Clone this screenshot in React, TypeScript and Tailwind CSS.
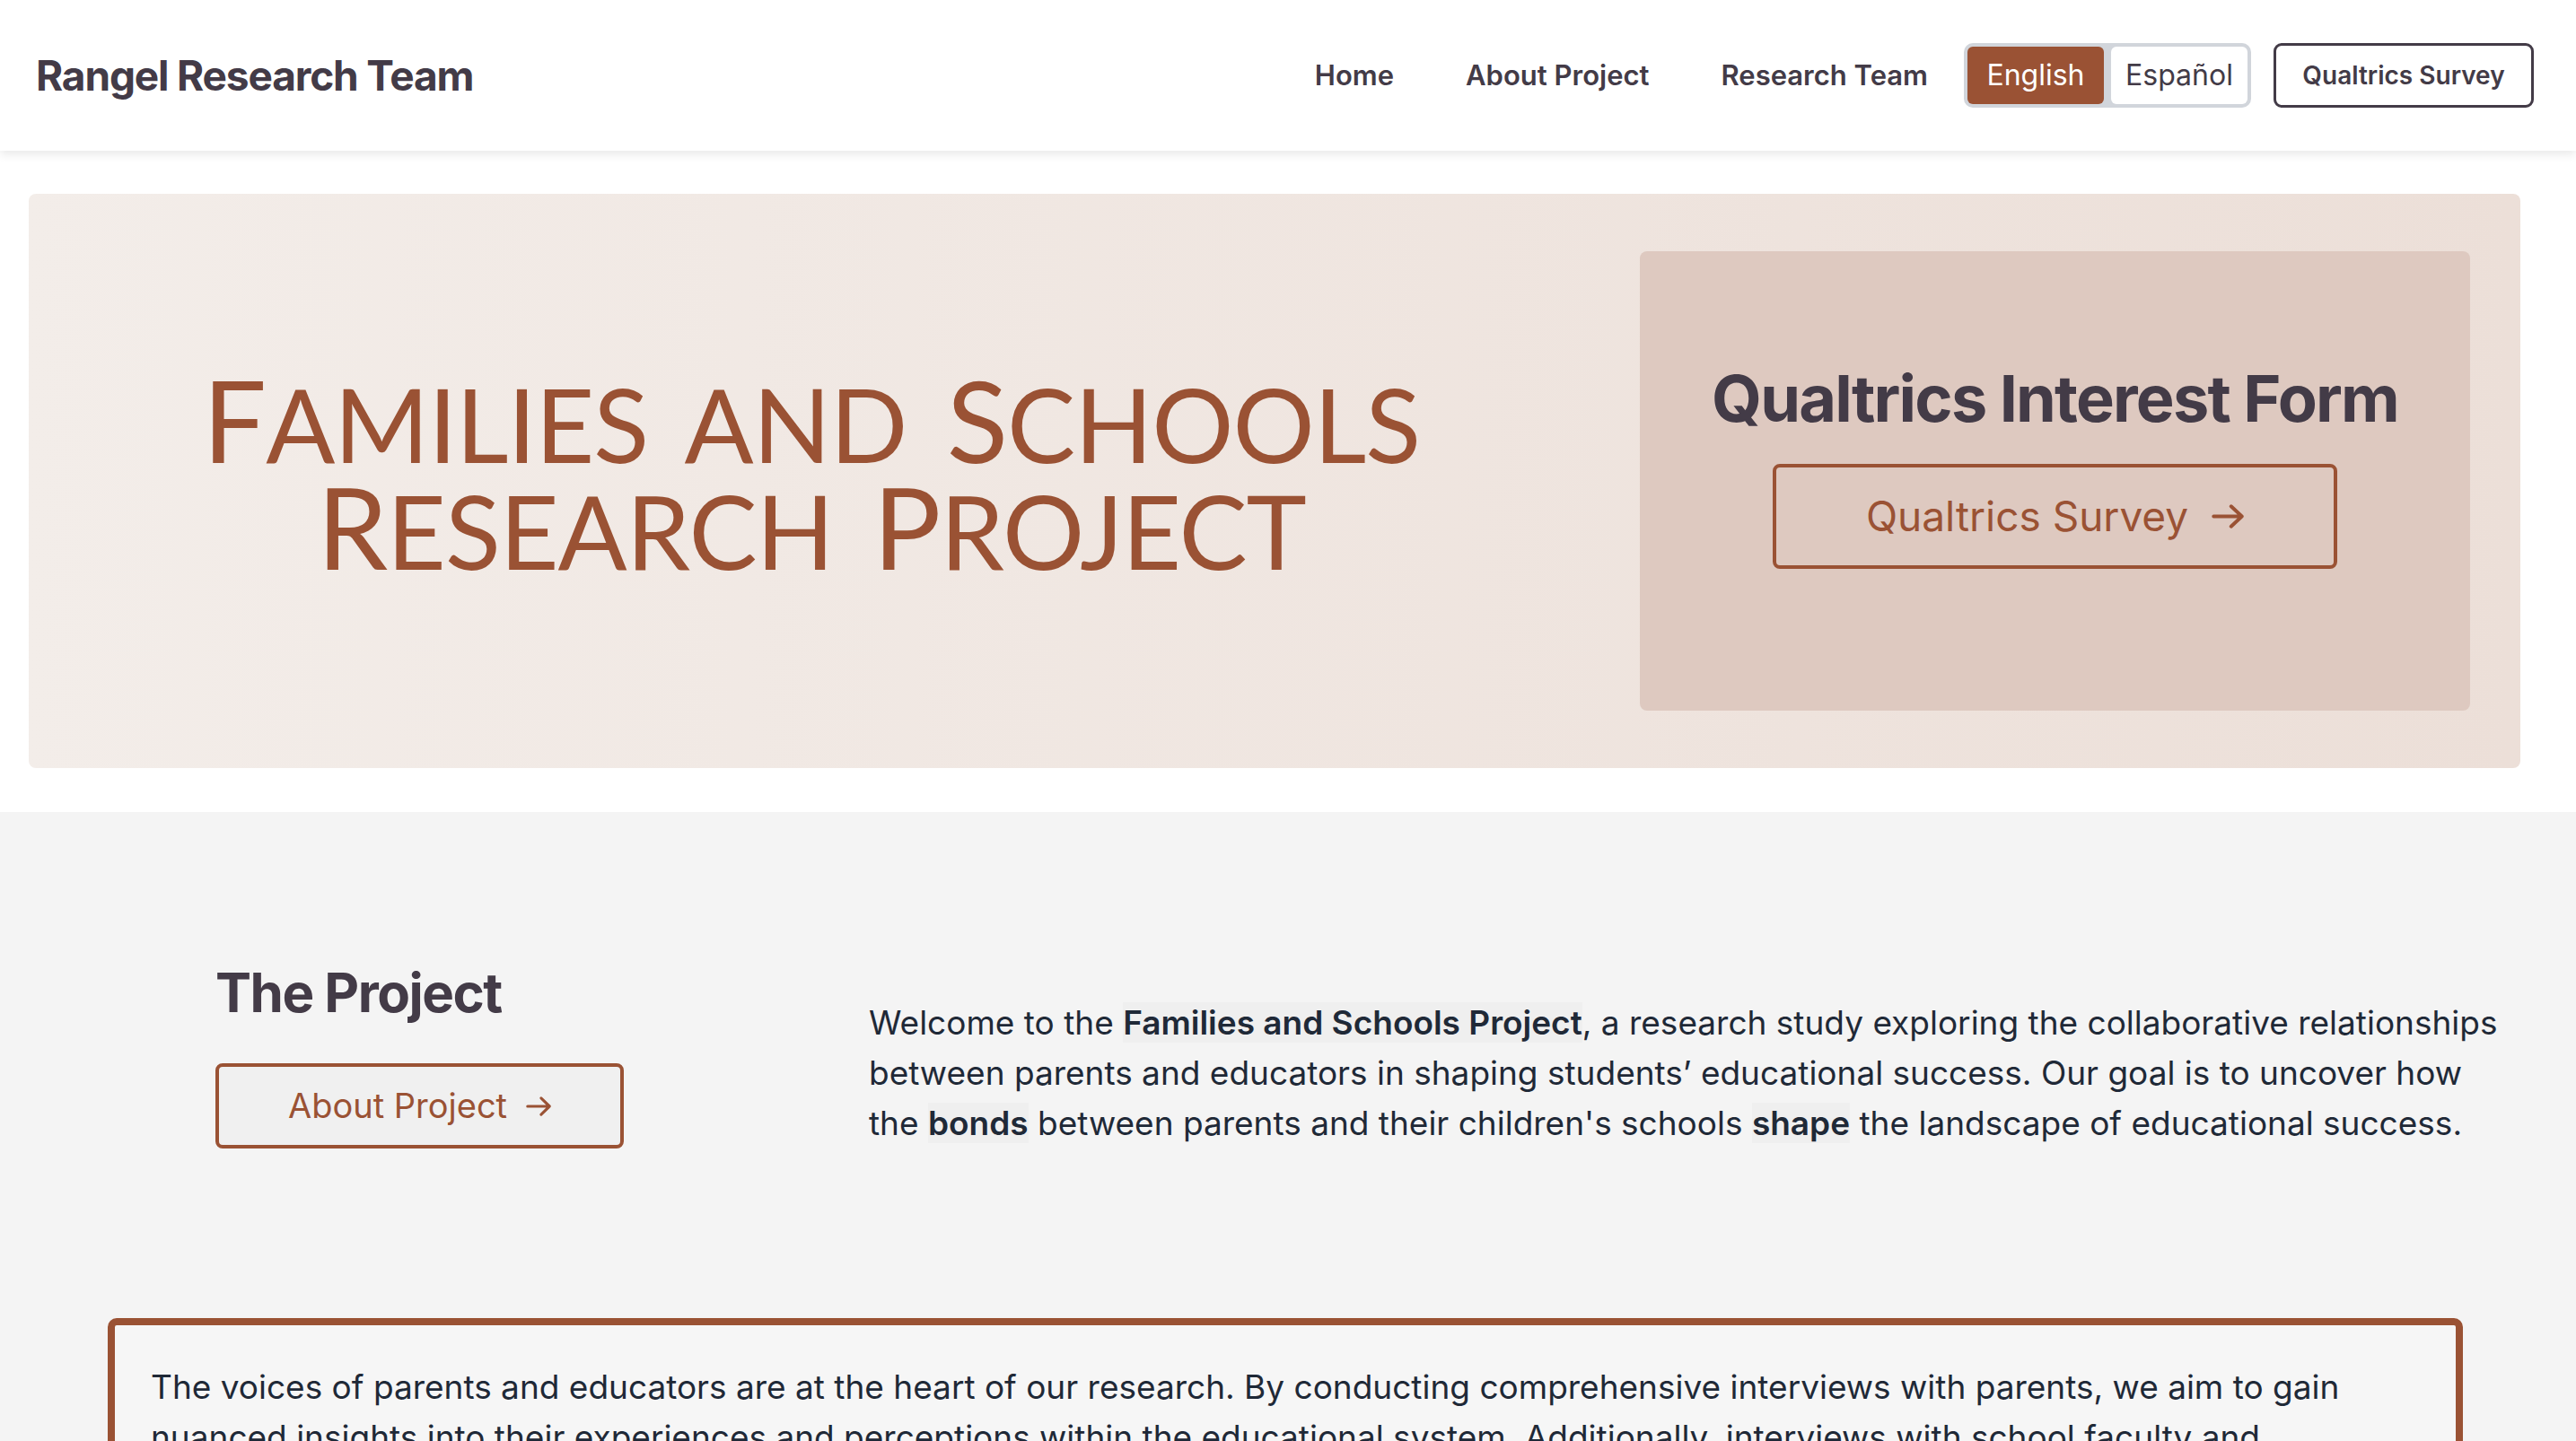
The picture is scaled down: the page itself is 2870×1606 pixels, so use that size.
import React from "react";

function Arrow({ w, h, sw = 2.2 }: { w: number; h: number; sw?: number }) {
  return (
    <svg width={w} height={h} viewBox="0 0 24 18" fill="none" stroke="currentColor" strokeWidth={sw} strokeLinecap="round" strokeLinejoin="round" preserveAspectRatio="none">
      <path d="M1.5 9h21M14.5 1.5 22.5 9l-8 7.5" />
    </svg>
  );
}

export default function App() {
  return (
    <div className="min-h-screen bg-white font-['Inter','Liberation_Sans',sans-serif] text-[#433b47]">
      {/* NAV */}
      <header className="relative z-10 flex h-[168px] items-center bg-white pl-[40px] pr-[47px] shadow-[0_4px_10px_rgba(0,0,0,0.09)]">
        <div className="text-[46px] font-bold tracking-tight text-[#433b47]">Rangel Research Team</div>
        <nav className="ml-auto flex items-center">
          <a className="px-[40px] text-[31px] font-semibold text-[#433b47]">Home</a>
          <a className="px-[40px] text-[31px] font-semibold text-[#433b47]">About Project</a>
          <a className="px-[40px] text-[31px] font-semibold text-[#433b47]">Research Team</a>
          <div className="flex gap-[8px] rounded-[10px] bg-[#d1d5db] p-[4px]">
            <button className="flex h-[64px] w-[152px] items-center justify-center rounded-[6px] bg-[#9a5234] text-[32px] text-white">English</button>
            <button className="flex h-[64px] w-[152px] items-center justify-center rounded-[6px] bg-white text-[32px] text-[#433b47]">Español</button>
          </div>
          <button className="ml-[25px] flex h-[72px] w-[290px] items-center justify-center rounded-[9px] border-[3px] border-[#433b47] bg-white text-[28px] font-semibold text-[#433b47]">
            Qualtrics Survey
          </button>
        </nav>
      </header>

      {/* HERO */}
      <section className="ml-[32px] mr-[62px] mt-[48px] flex rounded-[8px] bg-linear-to-r from-[#f3ede9] to-[#ecdfd8] py-[64px] pl-[64px] pr-[56px]">
        <div className="flex w-[1616px] items-center justify-center pb-[18px]">
          <div className="text-center font-['Lato','Open_Sans',sans-serif] font-normal tracking-[-1px] text-[#9a5234] [word-spacing:16px]">
            <div className="h-[119px] whitespace-nowrap leading-[119px]">
              <span className="text-[126px]">F</span>
              <span className="text-[114px]">AMILIES AND </span>
              <span className="text-[126px]">S</span>
              <span className="text-[114px]">CHOOLS</span>
            </div>
            <div className="h-[119px] whitespace-nowrap leading-[119px]">
              <span className="text-[126px]">R</span>
              <span className="text-[114px]">ESEARCH </span>
              <span className="text-[126px]">P</span>
              <span className="text-[114px]">ROJECT</span>
            </div>
          </div>
        </div>
        <div className="ml-auto flex h-[512px] w-[925px] flex-col items-center rounded-[8px] bg-[#dec9c0] pt-[124px]">
          <h2 className="text-[72px] font-bold leading-[80px] tracking-tight text-[#433b47]">Qualtrics Interest Form</h2>
          <button className="mt-[33px] flex h-[117px] w-[629px] items-center justify-center gap-[26px] rounded-[8px] border-[4px] border-[#9a5234] text-[46px] text-[#9a5234]">
            <span>Qualtrics Survey</span>
            <Arrow w={36} h={27} sw={2.6} />
          </button>
        </div>
      </section>

      {/* PROJECT */}
      <section className="mt-[49px] bg-[#f4f4f4] pb-[200px] pt-[165px]">
        <div className="flex items-end">
          <div className="w-[968px] pl-[240px]">
            <h2 className="text-[60px] font-bold leading-[72px] tracking-tight text-[#433b47]">The Project</h2>
            <button className="mt-[43px] flex h-[95px] w-[455px] items-center justify-center gap-[21px] rounded-[8px] border-[4px] border-[#9a5234] bg-[#f0f0f0] text-[38px] text-[#9a5234]">
              <span>About Project</span>
              <Arrow w={28} h={22} sw={2.6} />
            </button>
          </div>
          <p className="w-[1830px] text-[37px] leading-[56px] text-[#1f2937]">
            Welcome to the <strong className="bg-[#efefef] font-semibold">Families and Schools Project</strong>, a research study exploring the collaborative relationships between parents and educators in shaping students’ educational success. Our goal is to uncover how the <strong className="bg-[#efefef] font-semibold">bonds</strong> between parents and their children's schools <strong className="bg-[#efefef] font-semibold">shape</strong> the landscape of educational success.
          </p>
        </div>

        <div className="ml-[120px] mt-[189px] w-[2624px] rounded-[10px] border-[8px] border-[#9a5234] bg-[#f6f6f6] px-[40px] pb-[48px] pt-[41px]">
          <p className="text-[37px] leading-[56px] text-[#1f2937]">
            The voices of parents and educators are at the heart of our research. By conducting comprehensive interviews with parents, we aim to gain nuanced insights into their experiences and perceptions within the educational system. Additionally, interviews with school faculty and administrators will provide valuable perspectives on how schools engage with families and build lasting partnerships.
          </p>
        </div>
      </section>
    </div>
  );
}
